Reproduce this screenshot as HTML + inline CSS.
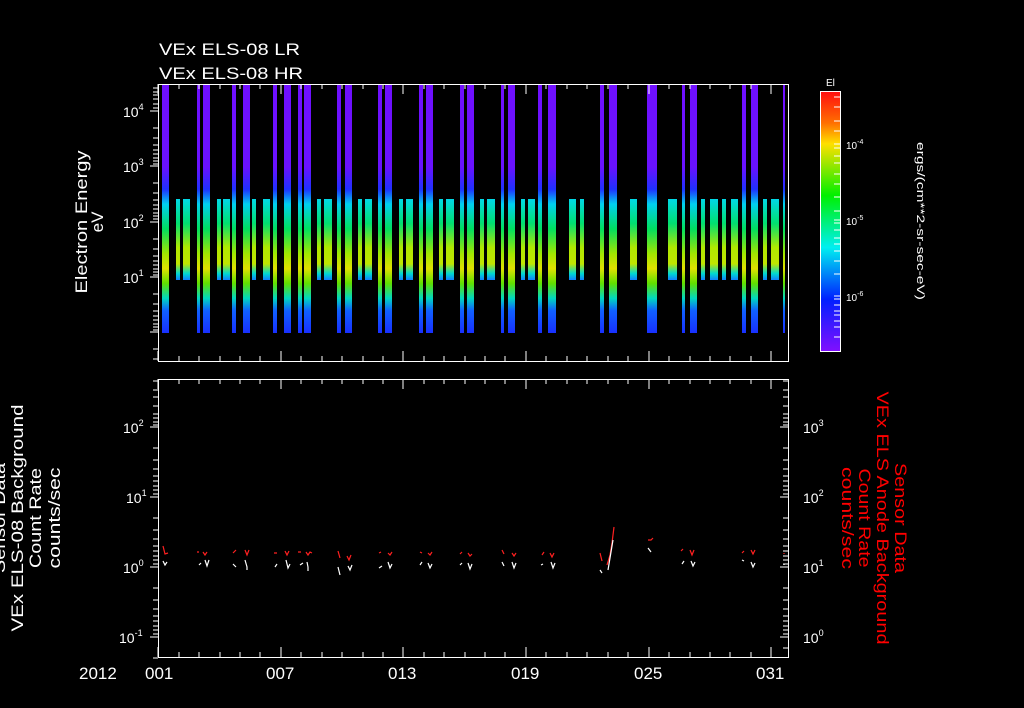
<!DOCTYPE html>
<html><head><meta charset="utf-8"><style>
html,body{margin:0;padding:0;background:#000;}
svg{display:block;font-family:"Liberation Sans",sans-serif;}
</style></head><body>
<svg width="1024" height="708" viewBox="0 0 1024 708" xmlns="http://www.w3.org/2000/svg">
<defs>
<linearGradient id="tall" x1="0" y1="85" x2="0" y2="333" gradientUnits="userSpaceOnUse">
<stop offset="0" stop-color="#7010ff"/>
<stop offset="0.33" stop-color="#6a12ff"/>
<stop offset="0.42" stop-color="#2030ff"/>
<stop offset="0.48" stop-color="#00d0f0"/>
<stop offset="0.58" stop-color="#00e060"/>
<stop offset="0.68" stop-color="#a0e800"/>
<stop offset="0.74" stop-color="#e0e000"/>
<stop offset="0.80" stop-color="#60e000"/>
<stop offset="0.86" stop-color="#00d8c0"/>
<stop offset="0.91" stop-color="#1060ff"/>
<stop offset="1" stop-color="#1830ff"/>
</linearGradient>
<linearGradient id="short" x1="0" y1="199" x2="0" y2="280" gradientUnits="userSpaceOnUse">
<stop offset="0" stop-color="#00d8e8"/>
<stop offset="0.3" stop-color="#00e070"/>
<stop offset="0.6" stop-color="#b0e800"/>
<stop offset="0.8" stop-color="#c0e400"/>
<stop offset="0.92" stop-color="#00d8d0"/>
<stop offset="1" stop-color="#1080ff"/>
</linearGradient>
<linearGradient id="cb" x1="0" y1="0" x2="0" y2="1">
<stop offset="0" stop-color="#ff1010"/>
<stop offset="0.12" stop-color="#ff7000"/>
<stop offset="0.2" stop-color="#ffe000"/>
<stop offset="0.4" stop-color="#00f000"/>
<stop offset="0.6" stop-color="#00f0f0"/>
<stop offset="0.8" stop-color="#0020ff"/>
<stop offset="1" stop-color="#8010ff"/>
</linearGradient>
</defs>
<rect width="1024" height="708" fill="#000"/>
<text x="159" y="55" fill="#fff" font-size="17" textLength="141" lengthAdjust="spacingAndGlyphs">VEx ELS-08 LR</text>
<text x="159" y="79" fill="#fff" font-size="17" textLength="144" lengthAdjust="spacingAndGlyphs">VEx ELS-08 HR</text>

<g fill="url(#tall)">
<rect x="162" y="85" width="7" height="248"/><rect x="197" y="85" width="3" height="248"/><rect x="203" y="85" width="7" height="248"/>
<rect x="232" y="85" width="4" height="248"/><rect x="243" y="85" width="7" height="248"/><rect x="273" y="85" width="4" height="248"/>
<rect x="284" y="85" width="7" height="248"/><rect x="298" y="85" width="4" height="248"/><rect x="304" y="85" width="7" height="248"/>
<rect x="337" y="85" width="4" height="248"/><rect x="345" y="85" width="7" height="248"/><rect x="378" y="85" width="4" height="248"/>
<rect x="385" y="85" width="7" height="248"/><rect x="419" y="85" width="4" height="248"/><rect x="426" y="85" width="7" height="248"/>
<rect x="460" y="85" width="4" height="248"/><rect x="467" y="85" width="7" height="248"/><rect x="501" y="85" width="3" height="248"/>
<rect x="508" y="85" width="7" height="248"/><rect x="538" y="85" width="4" height="248"/><rect x="548" y="85" width="8" height="248"/>
<rect x="600" y="85" width="4" height="248"/><rect x="609" y="85" width="8" height="248"/><rect x="647" y="85" width="10" height="248"/>
<rect x="682" y="85" width="3" height="248"/><rect x="690" y="85" width="7" height="248"/><rect x="742" y="85" width="4" height="248"/>
<rect x="751" y="85" width="7" height="248"/><rect x="783" y="85" width="2" height="248"/>
</g>
<g fill="url(#short)">
<rect x="176" y="199" width="4" height="81"/><rect x="183" y="199" width="7" height="81"/><rect x="217" y="199" width="4" height="81"/>
<rect x="223" y="199" width="7" height="81"/><rect x="252" y="199" width="4" height="81"/><rect x="263" y="199" width="7" height="81"/>
<rect x="317" y="199" width="4" height="81"/><rect x="324" y="199" width="8" height="81"/><rect x="358" y="199" width="4" height="81"/>
<rect x="365" y="199" width="7" height="81"/><rect x="399" y="199" width="4" height="81"/><rect x="406" y="199" width="7" height="81"/>
<rect x="439" y="199" width="4" height="81"/><rect x="446" y="199" width="8" height="81"/><rect x="480" y="199" width="4" height="81"/>
<rect x="487" y="199" width="8" height="81"/><rect x="521" y="199" width="4" height="81"/><rect x="528" y="199" width="7" height="81"/>
<rect x="569" y="199" width="7" height="81"/><rect x="580" y="199" width="4" height="81"/><rect x="630" y="199" width="7" height="81"/>
<rect x="668" y="199" width="9" height="81"/><rect x="701" y="199" width="4" height="81"/><rect x="710" y="199" width="8" height="81"/>
<rect x="722" y="199" width="4" height="81"/><rect x="731" y="199" width="7" height="81"/><rect x="763" y="199" width="4" height="81"/>
<rect x="771" y="199" width="8" height="81"/>
</g>

<g stroke="#fff" stroke-width="1" fill="none">
<rect x="158.5" y="84.5" width="630" height="277"/>
<rect x="158.5" y="379.5" width="630" height="278"/>
<rect x="820.5" y="91.5" width="20" height="260"/>
</g>
<rect x="821" y="92" width="19" height="259" fill="url(#cb)"/>

<g stroke="#fff" stroke-width="1">
<path d="M158 84v10M281 84v10M403 84v10M526 84v10M649 84v10M771 84v10M158 361v-10M281 361v-10M403 361v-10M526 361v-10M649 361v-10M771 361v-10"/>
<path d="M179 84v5M199 84v5M220 84v5M240 84v5M260 84v5M301 84v5M322 84v5M342 84v5M363 84v5M383 84v5M424 84v5M444 84v5M465 84v5M485 84v5M505 84v5M546 84v5M567 84v5M587 84v5M608 84v5M628 84v5M669 84v5M690 84v5M710 84v5M730 84v5M751 84v5
M179 361v-5M199 361v-5M220 361v-5M240 361v-5M260 361v-5M301 361v-5M322 361v-5M342 361v-5M363 361v-5M383 361v-5M424 361v-5M444 361v-5M465 361v-5M485 361v-5M505 361v-5M546 361v-5M567 361v-5M587 361v-5M608 361v-5M628 361v-5M669 361v-5M690 361v-5M710 361v-5M730 361v-5M751 361v-5"/>
<path d="M158 379v10M281 379v10M403 379v10M526 379v10M649 379v10M771 379v10M158 657v-10M281 657v-10M403 657v-10M526 657v-10M649 657v-10M771 657v-10"/>
<path d="M179 379v5M199 379v5M220 379v5M240 379v5M260 379v5M301 379v5M322 379v5M342 379v5M363 379v5M383 379v5M424 379v5M444 379v5M465 379v5M485 379v5M505 379v5M546 379v5M567 379v5M587 379v5M608 379v5M628 379v5M669 379v5M690 379v5M710 379v5M730 379v5M751 379v5
M179 657v-5M199 657v-5M220 657v-5M240 657v-5M260 657v-5M301 657v-5M322 657v-5M342 657v-5M363 657v-5M383 657v-5M424 657v-5M444 657v-5M465 657v-5M485 657v-5M505 657v-5M546 657v-5M567 657v-5M587 657v-5M608 657v-5M628 657v-5M669 657v-5M690 657v-5M710 657v-5M730 657v-5M751 657v-5"/>
<path d="M150 111h8M150 166h8M150 222h8M150 277h8M150 332h8
M153 88h5M153 92h5M153 95h5M153 99h5M153 104h5M153 108h5M153 128h5M153 138h5M153 145h5M153 150h5M153 154h5M153 158h5M153 161h5M153 164h5
M153 183h5M153 193h5M153 200h5M153 205h5M153 209h5M153 213h5M153 216h5M153 219h5
M153 239h5M153 249h5M153 256h5M153 261h5M153 265h5M153 269h5M153 272h5M153 275h5
M153 294h5M153 304h5M153 311h5M153 316h5M153 320h5M153 324h5M153 327h5M153 330h5
M153 349h5M153 359h5"/>
<path d="M150 427h8M150 497h8M150 567h8M150 637h8
M153 381h5M153 390h5M153 397h5M153 406h5M153 414h5M153 418h5M153 422h5M153 425h5
M153 448h5M153 460h5M153 469h5M153 476h5M153 481h5M153 486h5M153 490h5M153 494h5
M153 518h5M153 530h5M153 539h5M153 546h5M153 551h5M153 556h5M153 560h5M153 564h5
M153 588h5M153 600h5M153 609h5M153 616h5M153 621h5M153 626h5M153 630h5M153 634h5
M153 658h5"/>
<path d="M780 427h9M780 497h9M780 567h9M780 637h9
M783 381h6M783 390h6M783 397h6M783 406h6M783 414h6M783 418h6M783 422h6M783 425h6
M783 448h6M783 460h6M783 469h6M783 476h6M783 481h6M783 486h6M783 490h6M783 494h6
M783 518h6M783 530h6M783 539h6M783 546h6M783 551h6M783 556h6M783 560h6M783 564h6
M783 588h6M783 600h6M783 609h6M783 616h6M783 621h6M783 626h6M783 630h6M783 634h6
M783 648h6"/>
<path d="M834 97h6M834 107h6M834 121h6M834 131h6M834 144h6M834 148h6M834 156h6M834 163h6M834 174h6M834 184h6M834 197h6M834 211h6M834 220h6M834 223h6M834 230h6M834 238h6M834 244h6M834 251h6M834 261h6M834 274h6M834 296h6M834 299h6M834 305h6M834 311h6M834 315h6M834 321h6M834 327h6M834 337h6"/>
</g>

<g fill="#fff" font-size="14">
<text x="123" y="117">10<tspan font-size="9" dy="-7">4</tspan></text>
<text x="123" y="172">10<tspan font-size="9" dy="-7">3</tspan></text>
<text x="123" y="228">10<tspan font-size="9" dy="-7">2</tspan></text>
<text x="123" y="283">10<tspan font-size="9" dy="-7">1</tspan></text>
<text x="123" y="433">10<tspan font-size="9" dy="-7">2</tspan></text>
<text x="126" y="503">10<tspan font-size="9" dy="-7">1</tspan></text>
<text x="123" y="573">10<tspan font-size="9" dy="-7">0</tspan></text>
<text x="119" y="643">10<tspan font-size="9" dy="-7">-1</tspan></text>
<text x="803" y="433">10<tspan font-size="9" dy="-7">3</tspan></text>
<text x="803" y="503">10<tspan font-size="9" dy="-7">2</tspan></text>
<text x="803" y="573">10<tspan font-size="9" dy="-7">1</tspan></text>
<text x="803" y="643">10<tspan font-size="9" dy="-7">0</tspan></text>
</g>
<g fill="#fff" font-size="10">
<text x="846" y="149">10<tspan font-size="7" dy="-5">-4</tspan></text>
<text x="846" y="225">10<tspan font-size="7" dy="-5">-5</tspan></text>
<text x="846" y="301">10<tspan font-size="7" dy="-5">-6</tspan></text>
<text x="826" y="86" font-size="10">El</text>
<text transform="translate(917,221) rotate(90)" text-anchor="middle" font-size="11" textLength="158" lengthAdjust="spacingAndGlyphs">ergs/(cm**2-sr-sec-eV)</text>
</g>
<g fill="#fff" font-size="17">
<text x="79" y="679">2012</text>
<text x="145" y="679">001</text>
<text x="266" y="679">007</text>
<text x="388" y="679">013</text>
<text x="511" y="679">019</text>
<text x="634" y="679">025</text>
<text x="756" y="679">031</text>
<text transform="translate(87,222) rotate(-90)" text-anchor="middle" textLength="143" lengthAdjust="spacingAndGlyphs">Electron Energy</text>
<text transform="translate(103,222) rotate(-90)" text-anchor="middle">eV</text>
<text transform="translate(5,518) rotate(-90)" text-anchor="middle" textLength="110" lengthAdjust="spacingAndGlyphs">Sensor Data</text>
<text transform="translate(23,518) rotate(-90)" text-anchor="middle" textLength="227" lengthAdjust="spacingAndGlyphs">VEx ELS-08 Background</text>
<text transform="translate(41,518) rotate(-90)" text-anchor="middle" textLength="100" lengthAdjust="spacingAndGlyphs">Count Rate</text>
<text transform="translate(60,518) rotate(-90)" text-anchor="middle" textLength="101" lengthAdjust="spacingAndGlyphs">counts/sec</text>
</g>
<g fill="#ff0000" font-size="17">
<text transform="translate(895,518) rotate(90)" text-anchor="middle" textLength="110" lengthAdjust="spacingAndGlyphs">Sensor Data</text>
<text transform="translate(877,518) rotate(90)" text-anchor="middle" textLength="253" lengthAdjust="spacingAndGlyphs">VEx ELS Anode Background</text>
<text transform="translate(859,518) rotate(90)" text-anchor="middle" textLength="99" lengthAdjust="spacingAndGlyphs">Count Rate</text>
<text transform="translate(842,518) rotate(90)" text-anchor="middle" textLength="102" lengthAdjust="spacingAndGlyphs">counts/sec</text>
</g>

<g stroke="#ff2020" stroke-width="1.2" fill="none">
<path d="M163 546l2 8 3-1M197 552h2M203 552l2 3 2-3M233 553l3-3M245 550l2 5 2-5M274 553h3M285 551l2 4 2-4M298 552h3M306 552l2 3 2-3 2 1M338 551l2 7M347 556l2 4 2-5M379 553l2-1M388 553l2 2 2-3M420 552l2 1M428 553l2 2 2-3M460 554l2-2M468 553l2 3 2-2M502 550l2 4M512 553l2 3 2-3M542 555l2-3M550 553l2 4 2-4M600 553l2 8M607 565l3-10 2-12 2-16M648 540l3 0 2-2M681 551l2-2M690 550l2 5 2-5M742 553l2-2M751 550l2 4 2-4M784 553v1"/>
</g>
<g stroke="#fff" stroke-width="1.2" fill="none">
<path d="M163 561l2 4 2-3M199 565l2-2M205 560l2 6 2-6M233 564l3 3M245 560l2 7v3M275 567l2-3M286 560l2 8 2-4M300 565l3-2M307 562l1 5v4M338 567l2 8M348 566l2 4 2-5M379 568l3-2M388 562l2 6 2-4M420 565l2-3M428 563l2 5 2-4M460 565l2-2M468 563l2 6 2-5M502 562l2 4M512 562l2 6 2-5M541 565l2-1M551 562l2 6 2-5M600 570l2 3M608 570l2-12 3-18M648 548l3 4M682 564l2-3M691 561l2 5 2-4M742 560l2 1M751 562l2 5 2-4M784 564v1"/>
</g>
</svg>
</body></html>
